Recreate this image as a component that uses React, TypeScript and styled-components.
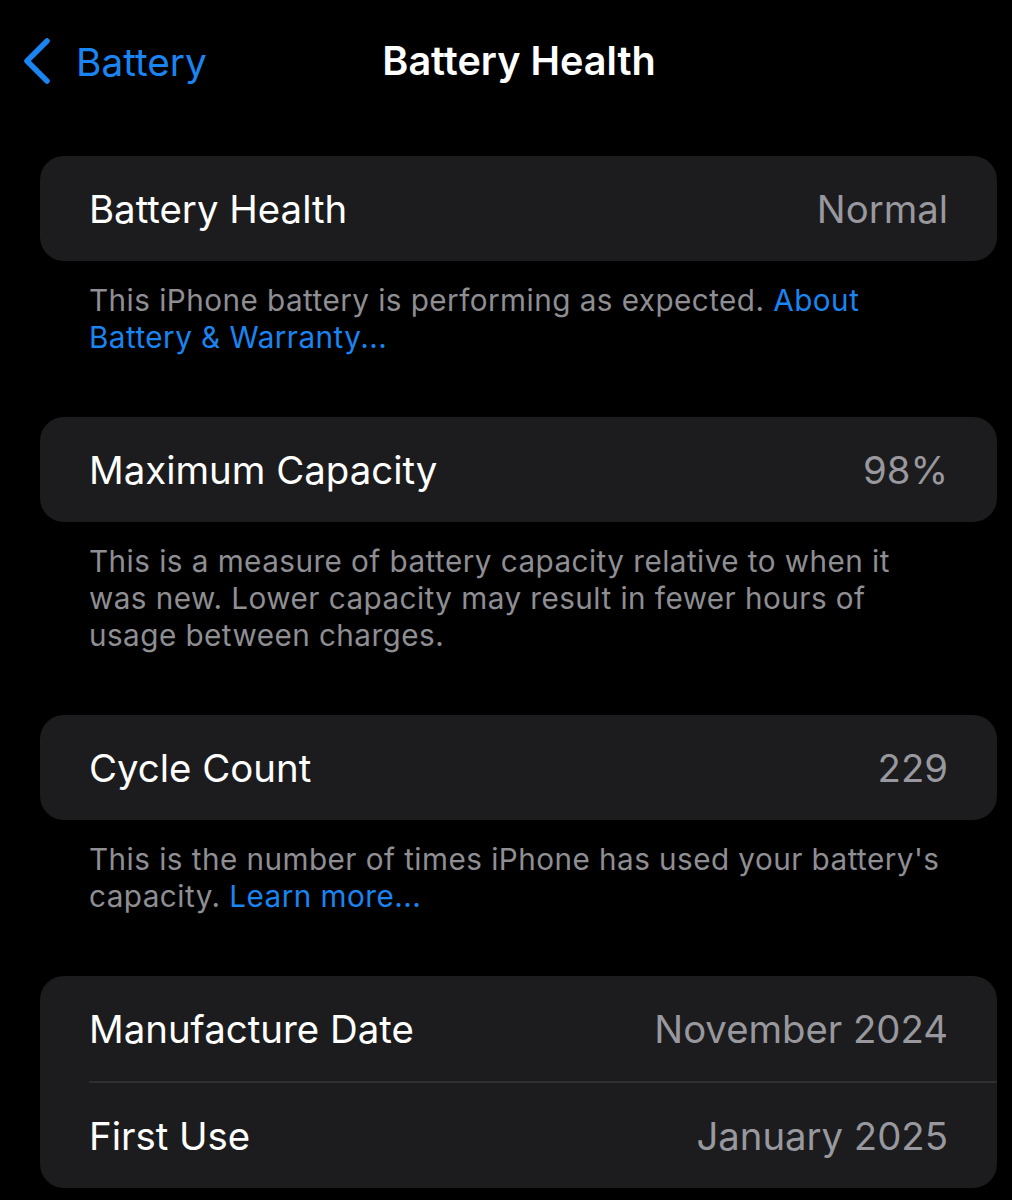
import styled, { createGlobalStyle } from "styled-components";

const Global = createGlobalStyle`
  html, body {
    margin: 0;
    padding: 0;
    background: #000;
  }
  body {
    font-family: Inter, "Noto Sans", sans-serif;
    -webkit-font-smoothing: antialiased;
  }
`;

const Page = styled.div`
  width: 1012px;
  min-height: 1200px;
  background: #000;
  color: #fff;
`;

const NavBar = styled.div`
  display: grid;
  grid-template-columns: 1fr auto 1fr;
  align-items: center;
  height: 122px;
  padding-left: 26px;
`;

const Back = styled.a`
  display: flex;
  align-items: center;
  gap: 24px;
  margin-left: -4px;
  color: #1a84f0;
  font-size: 38.8px;
  font-weight: 400;
  text-decoration: none;
  cursor: pointer;
`;

const Title = styled.h1`
  margin: 0;
  font-size: 39.6px;
  font-weight: 600;
  color: #fff;
`;

const Content = styled.div`
  padding: 34px 15px 0 40px;
`;

const Section = styled.section`
  margin-bottom: 61px;
`;

const Card = styled.div`
  background: #1c1c1e;
  border-radius: 24px;
  overflow: hidden;
`;

const Row = styled.div`
  display: flex;
  align-items: center;
  justify-content: space-between;
  height: 105px;
  padding: 0 49px;
`;

const Divider = styled.div`
  height: 2px;
  margin-left: 49px;
  background: #2f2f31;
`;

const Label = styled.span`
  font-size: 38.4px;
  color: #fff;
`;

const Value = styled.span`
  font-size: 38.3px;
  color: #98989e;
`;

const Footer = styled.p`
  margin: 0;
  padding: 21px 55px 0 49px;
  font-size: 29.7px;
  line-height: 37px;
  letter-spacing: 0.45px;
  color: #8e8e93;
`;

const Link = styled.a`
  color: #1a84f0;
  text-decoration: none;
  cursor: pointer;
`;

const Chevron = () => (
  <svg width="30" height="46" viewBox="0 0 30 46" fill="none">
    <path
      d="M25 3 L5 23 L25 43"
      stroke="#1a84f0"
      strokeWidth="5.5"
      strokeLinecap="round"
      strokeLinejoin="round"
    />
  </svg>
);

const rows = [
  { label: "Manufacture Date", value: "November 2024" },
  { label: "First Use", value: "January 2025" },
];

const App = () => {
  return (
    <Page>
      <Global />
      <NavBar>
        <Back>
          <Chevron />
          Battery
        </Back>
        <Title>Battery Health</Title>
        <span />
      </NavBar>
      <Content>
        <Section>
          <Card>
            <Row>
              <Label>Battery Health</Label>
              <Value>Normal</Value>
            </Row>
          </Card>
          <Footer>
            This iPhone battery is performing as expected.{" "}
            <Link>About Battery &amp; Warranty...</Link>
          </Footer>
        </Section>
        <Section>
          <Card>
            <Row>
              <Label>Maximum Capacity</Label>
              <Value>98%</Value>
            </Row>
          </Card>
          <Footer>
            This is a measure of battery capacity relative to when it was new.
            Lower capacity may result in fewer hours of usage between charges.
          </Footer>
        </Section>
        <Section>
          <Card>
            <Row>
              <Label>Cycle Count</Label>
              <Value>229</Value>
            </Row>
          </Card>
          <Footer>
            This is the number of times iPhone has used your battery's capacity.{" "}
            <Link>Learn more...</Link>
          </Footer>
        </Section>
        <Section>
          <Card>
            {rows.map((r, i) => (
              <div key={r.label}>
                {i > 0 && <Divider />}
                <Row>
                  <Label>{r.label}</Label>
                  <Value>{r.value}</Value>
                </Row>
              </div>
            ))}
          </Card>
        </Section>
      </Content>
    </Page>
  );
};

export default App;
